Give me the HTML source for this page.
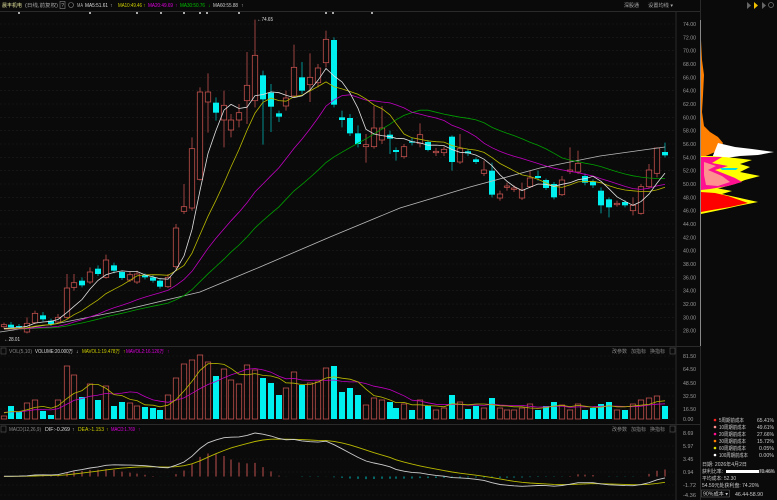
<!DOCTYPE html>
<html><head><meta charset="utf-8"><style>
html,body{margin:0;padding:0;background:#0a0a0a;width:777px;height:500px;overflow:hidden}
svg{display:block}
text{font-family:"Liberation Sans","Noto Sans CJK SC",sans-serif;font-size:5px}
</style></head><body>
<svg id="s" width="777" height="500" viewBox="0 0 777 500" xmlns="http://www.w3.org/2000/svg">
<rect width="777" height="500" fill="#0a0a0a"/>
<g id="grid"></g>
<!-- header -->
<g lengthAdjust="spacingAndGlyphs">
<text x="2" y="7" fill="#e8e8a0" textLength="20" lengthAdjust="spacingAndGlyphs">晨丰机电</text>
<text x="25" y="7" fill="#aaa" textLength="33" lengthAdjust="spacingAndGlyphs">(日线,前复权)</text>
<rect x="60" y="1.5" width="5" height="7" fill="none" stroke="#888" stroke-width="0.6"/>
<text x="61.2" y="7" fill="#aaa">?</text>
<circle cx="71" cy="5" r="2.5" fill="none" stroke="#888" stroke-width="0.6"/>
<text x="77" y="7" fill="#aaa" textLength="6" lengthAdjust="spacingAndGlyphs">MA</text>
<text x="85" y="7" fill="#ddd" textLength="23" lengthAdjust="spacingAndGlyphs">MA5:51.61</text><text x="110" y="7" fill="#ddd">↑</text>
<text x="118" y="7" fill="#d0d000" textLength="24" lengthAdjust="spacingAndGlyphs">MA10:49.46</text><text x="143" y="7" fill="#d0d000">↑</text>
<text x="148" y="7" fill="#e000e0" textLength="25" lengthAdjust="spacingAndGlyphs">MA20:49.69</text><text x="175" y="7" fill="#e000e0">↑</text>
<text x="180" y="7" fill="#00c000" textLength="25" lengthAdjust="spacingAndGlyphs">MA30:50.76</text><text x="208" y="7" fill="#00c000">↓</text>
<text x="213" y="7" fill="#ccc" textLength="25" lengthAdjust="spacingAndGlyphs">MA60:55.88</text><text x="241" y="7" fill="#ccc">↑</text>
<text x="624" y="7" fill="#aaa" textLength="15" lengthAdjust="spacingAndGlyphs">深股通</text>
<text x="648" y="7" fill="#aaa" textLength="25" lengthAdjust="spacingAndGlyphs">设置均线 ▾</text>
</g>
<g fill="#666"><path d="M747 2v7l4-3.5z"/><path d="M762 2v7l4-3.5z"/></g>
<path d="M754 2v7l4-3.5z" fill="#f0c000"/>
<circle cx="771" cy="5" r="2.5" fill="none" stroke="#777" stroke-width="0.7"/>
<g fill="#ddd" id="dots"></g>
<text x="257" y="21" fill="#ddd" textLength="16" lengthAdjust="spacingAndGlyphs">←74.65</text>
<text x="4" y="341" fill="#ddd" textLength="16" lengthAdjust="spacingAndGlyphs">←28.01</text>
<!-- dividers -->
<g stroke="#2a2a2a" stroke-width="1">
<line x1="676" y1="12" x2="676" y2="500"/><line x1="700.5" y1="0" x2="700.5" y2="500"/>
<line x1="0" y1="346.5" x2="700" y2="346.5"/><line x1="0" y1="424.5" x2="700" y2="424.5"/>
<line x1="0" y1="11.5" x2="700" y2="11.5"/>
</g>
<g id="axis"></g>
<g id="chip"></g>
<g id="main"></g>
<!-- vol header -->
<rect x="1" y="348" width="5" height="6" fill="none" stroke="#666" stroke-width="0.5"/>
<text x="9" y="353" fill="#888" textLength="23" lengthAdjust="spacingAndGlyphs">VOL(5,10)</text>
<text x="35" y="353" fill="#ddd" textLength="38" lengthAdjust="spacingAndGlyphs">VOLUME:20.000万</text><text x="76" y="353" fill="#ddd">↓</text>
<text x="82" y="353" fill="#d0d000" textLength="38" lengthAdjust="spacingAndGlyphs">MAVOL1:19.478万</text><text x="123" y="353" fill="#d0d000">↑</text>
<text x="126" y="353" fill="#e000e0" textLength="38" lengthAdjust="spacingAndGlyphs">MAVOL2:16.126万</text><text x="167" y="353" fill="#e000e0">↑</text>
<text x="612" y="353" fill="#888" textLength="15" lengthAdjust="spacingAndGlyphs">改参数</text><text x="631" y="353" fill="#888" textLength="15" lengthAdjust="spacingAndGlyphs">加指标</text><text x="650" y="353" fill="#888" textLength="15" lengthAdjust="spacingAndGlyphs">换指标</text>
<rect x="670" y="348" width="5" height="6" fill="none" stroke="#666" stroke-width="0.5"/>
<rect x="1" y="426" width="5" height="6" fill="none" stroke="#666" stroke-width="0.5"/>
<text x="9" y="431" fill="#888" textLength="32" lengthAdjust="spacingAndGlyphs">MACD(12,26,9)</text>
<text x="45" y="431" fill="#ddd" textLength="25" lengthAdjust="spacingAndGlyphs">DIF:-0.269</text><text x="72" y="431" fill="#ddd">↑</text>
<text x="78" y="431" fill="#d0d000" textLength="26" lengthAdjust="spacingAndGlyphs">DEA:-1.153</text><text x="106" y="431" fill="#d0d000">↑</text>
<text x="111" y="431" fill="#e000e0" textLength="24" lengthAdjust="spacingAndGlyphs">MACD:1.769</text><text x="138" y="431" fill="#e000e0">↑</text>
<text x="612" y="431" fill="#888" textLength="15" lengthAdjust="spacingAndGlyphs">改参数</text><text x="631" y="431" fill="#888" textLength="15" lengthAdjust="spacingAndGlyphs">加指标</text><text x="650" y="431" fill="#888" textLength="15" lengthAdjust="spacingAndGlyphs">换指标</text>
<rect x="670" y="426" width="5" height="6" fill="none" stroke="#666" stroke-width="0.5"/>
<!-- right legend -->
<g>
<circle cx="715" cy="420" r="1.3" fill="#ff2020"/><text x="719" y="422" fill="#ccc" textLength="25" lengthAdjust="spacingAndGlyphs">5周期前成本</text><text x="757" y="422" fill="#ccc" textLength="17" lengthAdjust="spacingAndGlyphs">65.41%</text>
<circle cx="715" cy="427" r="1.3" fill="#ff9090"/><text x="719" y="429" fill="#ccc" textLength="27" lengthAdjust="spacingAndGlyphs">10周期前成本</text><text x="757" y="429" fill="#ccc" textLength="17" lengthAdjust="spacingAndGlyphs">49.61%</text>
<circle cx="715" cy="434" r="1.3" fill="#ff1090"/><text x="719" y="436" fill="#ccc" textLength="27" lengthAdjust="spacingAndGlyphs">20周期前成本</text><text x="757" y="436" fill="#ccc" textLength="17" lengthAdjust="spacingAndGlyphs">27.66%</text>
<circle cx="715" cy="441" r="1.3" fill="#ff8000"/><text x="719" y="443" fill="#ccc" textLength="27" lengthAdjust="spacingAndGlyphs">30周期前成本</text><text x="757" y="443" fill="#ccc" textLength="17" lengthAdjust="spacingAndGlyphs">15.72%</text>
<circle cx="715" cy="448" r="1.3" fill="#e0e000"/><text x="719" y="450" fill="#ccc" textLength="27" lengthAdjust="spacingAndGlyphs">60周期前成本</text><text x="759" y="450" fill="#ccc" textLength="15" lengthAdjust="spacingAndGlyphs">0.05%</text>
<circle cx="715" cy="455" r="1.3" fill="#fff"/><text x="719" y="457" fill="#ccc" textLength="29" lengthAdjust="spacingAndGlyphs">100周期前成本</text><text x="759" y="457" fill="#ccc" textLength="15" lengthAdjust="spacingAndGlyphs">0.00%</text>
<text x="702" y="466" fill="#ccc" textLength="45" lengthAdjust="spacingAndGlyphs">日期: 2026年4月2日</text>
<text x="702" y="473" fill="#ccc" textLength="21" lengthAdjust="spacingAndGlyphs">获利比率:</text>
<rect x="726" y="470" width="47" height="3" fill="#333"/><rect x="726" y="470" width="33" height="3" fill="#fff"/>
<text x="759" y="473" fill="#ccc" textLength="16" lengthAdjust="spacingAndGlyphs">70.46%</text>
<text x="702" y="480" fill="#ccc" textLength="34" lengthAdjust="spacingAndGlyphs">平均成本: 52.30</text>
<text x="702" y="487" fill="#ccc" textLength="57" lengthAdjust="spacingAndGlyphs">54.59元处获利盘: 74.20%</text>
<rect x="701.5" y="490" width="28" height="7" fill="none" stroke="#666" stroke-width="0.5"/>
<text x="703" y="495.5" fill="#ccc" textLength="25" lengthAdjust="spacingAndGlyphs">90%成本 ▾</text>
<text x="735" y="496" fill="#ccc" textLength="28" lengthAdjust="spacingAndGlyphs">46.44-58.90</text>
</g>
</svg>
<script>
const NS="http://www.w3.org/2000/svg";
function el(p,t,a){const e=document.createElementNS(NS,t);for(const k in a)e.setAttribute(k,a[k]);p.appendChild(e);return e;}
const py=p=>24+(74-p)*6.667;
const D=[[4,28.6,28.9,29.2,28.3,416],[11,28.9,28.5,29.3,28.2,406],[19,28.7,28.6,29,28.3,412],[27,27.8,29.1,30,27.6,403],[35,29.2,30.6,31,29,400],[43,30.3,29.7,30.8,29.4,411],[51,29.5,29,29.8,28.7,415],[58,29.3,30,30.5,29,400],[67,30,34.4,36.5,29.8,366],[74,34.5,35.2,36.5,34,375],[82,35.5,34.8,36,34.5,397],[90,35.3,36.8,37.5,35,384],[98,37.3,36.5,37.8,36.2,400],[106,36,38.6,39.4,35.8,386],[114,37.8,37,38.2,36.6,406],[122,36.8,35.9,37,35.6,402],[130,35.6,36.4,36.8,35.3,403],[137,35.3,36.5,37,35,406],[145,36.3,36,36.6,35.7,407],[153,36,35.5,36.3,35.2,408],[160,35.5,34.6,35.8,34.3,410],[168,34.6,36,36.5,34.4,395],[176,37.6,43.4,44,37.3,378],[184,45.9,46.6,50,45.5,364],[192,46.4,55.3,57,46,360],[200,50.7,63.8,64.5,50.5,355],[208,62.3,63.8,66.6,57.7,362],[216,62.2,60.7,63,59.5,376],[224,59.6,61.8,64,55.5,369],[231,58.1,59.6,60.5,57,380],[239,59.6,60.7,62,58.5,384],[247,62.5,64.8,69.8,59,365],[255,62.5,69.3,74.65,61.5,370],[263,66.3,62.7,67,55.9,378],[271,63.7,61.6,65,57.8,383],[279,60.6,60.1,61,59.3,395],[286,61.7,62.9,64,61,388],[294,63.2,67.5,70.9,63,372],[302,66,64,68.3,63.5,385],[310,64.9,66,69.6,62.3,383],[318,65.2,67.4,68,64.5,382],[326,68.2,71.7,73,67.5,368],[334,71.6,61.9,72,61.5,366],[342,60,59.6,61,58.5,392],[350,59.9,57.6,60.5,57.2,388],[358,57.6,56,58.8,55.5,395],[366,55.6,55.9,57.5,53.2,405],[374,55.6,58.4,61.7,55.3,398],[382,56.6,58.4,61.7,56,400],[390,57.4,56.8,58,54.5,402],[396,55.1,54.8,55.5,53.5,408],[404,54.1,55.6,56,53.8,404],[412,56.4,56.2,57,55.8,410],[420,56.1,57.4,59.1,55.5,400],[428,56.3,55.1,56.6,54.9,406],[436,54.7,54.9,55.4,54.2,410],[444,54.7,55.2,55.6,54.2,408],[452,57.1,53.3,57.3,52,395],[460,53.3,55.3,57.5,53,402],[468,54.9,54.6,55.2,54.2,409],[476,53.7,53.3,54,53,406],[484,51.6,52.1,53.5,51.2,408],[492,52,48.4,53.2,48,398],[500,47.9,48.5,49,47.5,408],[507,49.5,49.7,50.2,49,410],[514,49.2,49.4,49.8,48.8,410],[522,47.9,49.1,50.2,47.6,408],[530,49.6,50.9,52,49.4,404],[538,51.2,50.9,52,50.5,410],[546,50.6,49.4,50.8,49.1,406],[554,50,48,50.3,47.7,402],[562,48.4,50.6,51.2,48.2,405],[570,51.9,52.1,55.5,51.5,410],[578,51.8,53.1,55,51.5,404],[585,51.2,50.2,51.6,49.8,410],[593,50.4,49.8,50.7,49.4,408],[601,49,46.8,49.5,45.6,404],[609,47.7,46.5,48,45,402],[617,46.9,47.1,47.5,46.6,410],[625,47.3,46.8,47.6,46.5,410],[633,46,46.8,48,45.3,404],[641,45.6,49.6,50,45.4,400],[649,49.6,52.1,53,49.3,398],[657,51.6,55.4,55.5,51,396],[665,54.8,54.3,56.2,54,406]];
const grid=document.getElementById('grid'),axis=document.getElementById('axis'),main=document.getElementById('main');
function lab(y,t){const e=el(axis,'text',{x:683,y:y+2,fill:'#999',textLength:t.length*2.6,lengthAdjust:'spacingAndGlyphs'});e.textContent=t;}
function gl(y){el(grid,'line',{x1:0,x2:676,y1:y,y2:y,stroke:'#1c1c1c','stroke-dasharray':'2,2','stroke-width':0.6});}
for(let p=74;p>=28;p-=2){const y=py(p);gl(y);lab(y,p.toFixed(2));}
[[356,'81.50'],[369,'64.50'],[383,'48.50'],[396,'32.50'],[409,'16.50'],[419,'0.00']].forEach(([y,t])=>{gl(y);lab(y,t);});
[[433,'8.69'],[446,'5.97'],[459,'3.45'],[472,'0.94'],[485,'-1.72'],[495,'-4.36']].forEach(([y,t])=>{gl(y);lab(y,t);});
el(axis,'line',{x1:700.5,x2:700.5,y1:20,y2:346,stroke:'#888','stroke-width':1});
[19,90,137,161,184,200,207,239,326,333,372].forEach(x=>el(document.getElementById('dots'),'circle',{cx:x,cy:13,r:1}));
const RED='#c0504d',CY='#00f0f0';
D.forEach(([x,o,c,h,l,vt])=>{
 const up=c>=o,top=py(Math.max(o,c)),bot=py(Math.min(o,c));
 el(main,'line',{x1:x,x2:x,y1:py(h),y2:py(l),stroke:up?RED:'#00b0b0','stroke-width':0.8});
 const hgt=Math.max(bot-top,1);
 if(up) el(main,'rect',{x:x-2.7,y:top,width:5.4,height:hgt,fill:'#0a0a0a',stroke:RED,'stroke-width':0.8});
 else el(main,'rect',{x:x-3,y:top,width:6,height:hgt,fill:CY});
 if(up) el(main,'rect',{x:x-2.7,y:vt,width:5.4,height:419-vt,fill:'none',stroke:RED,'stroke-width':0.8});
 else el(main,'rect',{x:x-3,y:vt,width:6,height:419-vt,fill:CY});
});
const pad=[];for(let i=0;i<40;i++)pad.push(28.2);
const C=pad.concat(D.map(d=>d[2]));
function mal(n,col){let pts=[];D.forEach((d,i)=>{const j=i+40;let s=0;for(let k=0;k<n;k++)s+=C[j-k];pts.push(d[0]+','+py(s/n).toFixed(1));});el(main,'polyline',{points:pts.join(' '),fill:'none',stroke:col,'stroke-width':0.8});}
el(main,'polyline',{points:'0,332 60,323 120,311 200,292 260,267 330,237 400,208 470,187 540,168 600,156 665,147',fill:'none',stroke:'#bbb','stroke-width':0.8});
mal(30,'#00a000');mal(20,'#c000c0');mal(10,'#b8b800');mal(5,'#e0e0e0');
const V=D.map(d=>d[5]);
function vml(n,col){let pts=[];V.forEach((v,i)=>{let s=0;for(let k=0;k<n;k++){s+=(i-k>=0?V[i-k]:412);}pts.push(D[i][0]+','+(s/n).toFixed(1));});el(main,'polyline',{points:pts.join(' '),fill:'none',stroke:col,'stroke-width':0.8});}
vml(10,'#c000c0');vml(5,'#b8b800');
let e12=28.2,e26=28.2,dea=0;const dif=[],de=[];
C.forEach((c,i)=>{e12=e12*11/13+c*2/13;e26=e26*25/27+c*2/27;const d=e12-e26;dea=dea*0.8+d*0.2;if(i>=40){dif.push(d);de.push(dea);}});
const my=v=>476.5-v*5;
D.forEach((d,i)=>{let h=2*(dif[i]-de[i]);if(h<0)h*=0.15;el(main,'line',{x1:d[0],x2:d[0],y1:476.5,y2:my(h*0.8),stroke:h>=0?RED:'#00c0c0','stroke-width':1});});
el(main,'polyline',{points:D.map((d,i)=>d[0]+','+my(de[i]).toFixed(1)).join(' '),fill:'none',stroke:'#b8b800','stroke-width':0.9});
el(main,'polyline',{points:D.map((d,i)=>d[0]+','+my(dif[i]).toFixed(1)).join(' '),fill:'none',stroke:'#ccc','stroke-width':0.9});
const ch=document.getElementById('chip');
el(ch,'polygon',{points:'701,40 702,60 704,75 703,95 702,112 704,126 710,132 718,137 723,143 720,150 701,158',fill:'#ff8000'});
el(ch,'polygon',{points:'718,143 735,147 752,149 774,152 758,155 740,156 726,158 712,158',fill:'#fff'});
el(ch,'polygon',{points:'712,156 735,158 752,160 740,164 750,167 740,172 760,176 745,180 735,184 720,188 710,190 701,190 701,156',fill:'#ffff00'});
el(ch,'polygon',{points:'701,190 716,188 732,191 722,194 740,198 758,202 738,206 725,209 701,214',fill:'#ffff00'});
el(ch,'polygon',{points:'701,192 715,193 728,196 748,203 730,207 712,210 701,212',fill:'#ff0000'});
el(ch,'polygon',{points:'701,157 722,157 712,163 728,166 715,170 735,178 742,182 728,186 710,189 701,190',fill:'#ff1090'});
el(ch,'polygon',{points:'704,162 716,166 708,170 722,176 730,182 718,186 706,185 704,175',fill:'#ff9090'});
el(ch,'polygon',{points:'720,168 738,168 736,170 722,170',fill:'#00e0e0'});
</script>
</body></html>
